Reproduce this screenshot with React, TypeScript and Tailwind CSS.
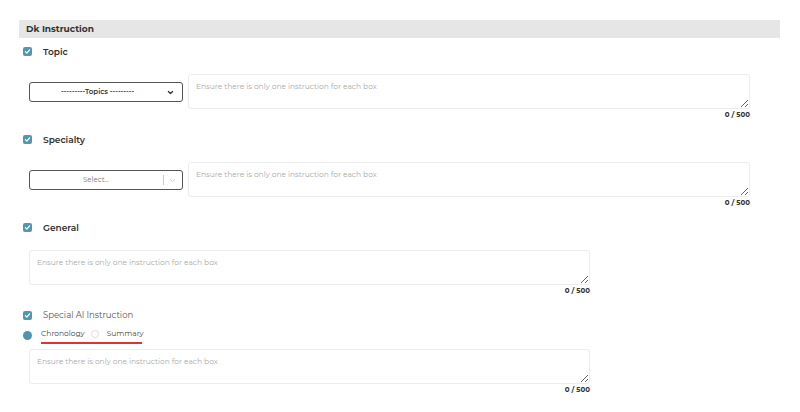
import { ReactNode } from 'react';

const font = { fontFamily: 'Montserrat, Inter, "Noto Sans", sans-serif' };

const Check = () => (
  <span className="flex h-[9px] w-[9px] items-center justify-center rounded-[2px] bg-[#4f97b3]">
    <svg viewBox="0 0 10 10" className="h-[7px] w-[7px]" fill="none" stroke="white" strokeWidth="1.8" strokeLinecap="round" strokeLinejoin="round">
      <path d="M2 5.2 4.1 7.3 8 2.8" />
    </svg>
  </span>
);

const Label = ({ children, bold = true }: { children: ReactNode; bold?: boolean }) => (
  <div className="flex items-center gap-[11px] pl-[23px]">
    <Check />
    <span className={`leading-none ${bold ? 'text-[9px] font-semibold text-[#333]' : 'text-[8.5px] text-[#555]'}`}>{children}</span>
  </div>
);

const Box = ({ className = '' }: { className?: string }) => (
  <div className={`flex flex-col ${className}`}>
    <textarea
      placeholder="Ensure there is only one instruction for each box"
      className="h-[35px] w-full rounded-[3px] border border-[#ececec] bg-white px-[7px] py-[6px] text-[7.5px] text-[#999] placeholder:text-[#aaa] outline-none"
      style={font}
    />
    <div className="mt-[2px] text-right text-[7px] font-bold leading-none text-[#333]">0 / 500</div>
  </div>
);

const Chevron = ({ light = false }: { light?: boolean }) => (
  <svg viewBox="0 0 10 10" className="h-[7px] w-[7px]" fill="none" stroke={light ? '#bbb' : '#333'} strokeWidth={light ? 1 : 1.8} strokeLinecap="round" strokeLinejoin="round">
    <path d="M2 3.5 5 6.5 8 3.5" />
  </svg>
);

export default function App() {
  return (
    <div className="h-[412px] w-[800px] overflow-hidden bg-white" style={font}>
      <div className="ml-[19px] mt-[20px] flex h-[18px] w-[761px] items-center bg-[#e6e6e6] pl-[7px]">
        <span className="text-[9px] font-bold text-[#333]">Dk Instruction</span>
      </div>

      <div className="mt-[9px]">
        <Label>Topic</Label>
      </div>
      <div className="ml-[29px] mt-[18px] flex w-[721px] items-start gap-[5px]">
        <div className="mt-[8px] flex h-[20px] w-[154px] items-center rounded-[3px] border-[1.5px] border-[#555] px-[8px]">
          <span className="mr-[10px] flex-1 text-center text-[7px] font-semibold text-[#333]">---------Topics ---------</span>
          <Chevron />
        </div>
        <Box className="flex-1" />
      </div>

      <div className="mt-[17px]">
        <Label>Specialty</Label>
      </div>
      <div className="ml-[29px] mt-[18px] flex w-[721px] items-start gap-[5px]">
        <div className="mt-[8px] flex h-[20px] w-[154px] items-center rounded-[3px] border-[1.5px] border-[#555] pl-[8px] pr-[6px]">
          <span className="mr-[4px] flex-1 text-center text-[7px] text-[#777]">Select...</span>
          <span className="mx-[5px] h-[10px] w-px bg-[#ccc]" />
          <Chevron light />
        </div>
        <Box className="flex-1" />
      </div>

      <div className="mt-[17px]">
        <Label>General</Label>
      </div>
      <Box className="ml-[29px] mt-[18px] w-[561px]" />

      <div className="mt-[17px]">
        <Label bold={false}>Special AI Instruction</Label>
      </div>
      <div className="ml-[23px] mt-[8px] flex items-center">
        <span className="h-[9px] w-[9px] rounded-full bg-[#4f93b0]" />
        <div className="ml-[9px] flex flex-col">
          <div className="flex items-center">
            <span className="text-[7.5px] text-[#444]">Chronology</span>
            <span className="ml-[6px] h-[8px] w-[8px] rounded-full border border-[#ddd]" />
            <span className="ml-[8px] text-[7.5px] text-[#444]">Summary</span>
          </div>
          <span className="mt-[3px] h-[1.5px] w-[101px] bg-[#d33]" />
        </div>
      </div>
      <Box className="ml-[29px] mt-[5px] w-[561px]" />
    </div>
  );
}
